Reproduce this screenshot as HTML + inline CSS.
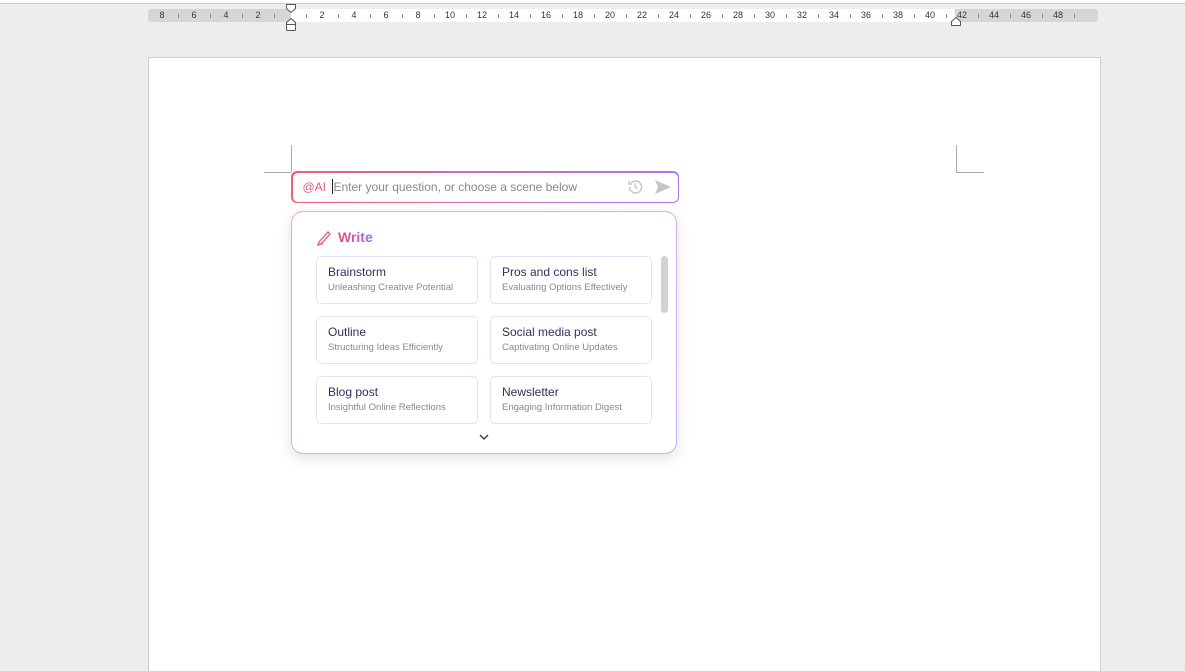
<!DOCTYPE html><html style="height:671px;overflow:hidden"><head><style>
body{margin:0;width:1185px;height:671px;background:#ededed;position:relative;overflow:hidden;font-family:"Liberation Sans",sans-serif}
.abs{position:absolute}
.ruler{left:148px;top:9px;width:950px;height:13px;background:#d6d6d6;border-radius:3px}
.rw{left:291px;top:9px;width:664px;height:13px;background:#fff}
.n{position:absolute;top:10px;font-size:9px;color:#333;width:20px;text-align:center}
.t{position:absolute;top:14px;width:1px;height:4px;background:#888}
.page{left:148px;top:57px;width:951px;height:614px;background:#fff;border:1px solid #d0d0d0;border-bottom:none}
.inp{left:291px;top:171px;width:388px;height:32px;border-radius:6px;background:linear-gradient(90deg,#f0606e,#a777f5);}
.inp>div{position:absolute;left:1.5px;top:1.5px;right:1.5px;bottom:1.5px;background:#fff;border-radius:5px}
.panel{left:291px;top:211px;width:386px;height:243px;border-radius:12px;background:linear-gradient(135deg,#f4aab8,#c9b0f5);box-shadow:0 4px 14px rgba(0,0,0,.12)}
.panel>.in{position:absolute;left:1px;top:1px;right:1px;bottom:1px;background:#fff;border-radius:11px}
.card{position:absolute;width:160px;height:46px;border:1px solid #e6e0fb;border-radius:5px;background:#fff}
.card b{position:absolute;left:11px;top:8px;font-weight:normal;font-size:12px;color:#3d2a5a}
.card i{position:absolute;left:11px;top:25px;font-style:normal;font-size:9.5px;color:#8a8694}
</style></head><body>
<div class="abs" style="left:0;top:0;width:1185px;height:3px;background:#fff;border-bottom:1px solid #c8c8c8"></div>
<div class="abs ruler"></div><div class="abs rw"></div>
<div id="r"></div>
<svg class="abs" style="left:285px;top:3px" width="12" height="30"><path d="M1.5 1.5h9v4l-4.5 4-4.5-4z" fill="#fff" stroke="#555"/><path d="M1.5 19.5l4.5-4 4.5 4v2h-9z" fill="#fff" stroke="#555"/><rect x="1.5" y="21.5" width="9" height="6" rx="1" fill="#fff" stroke="#555"/></svg>
<svg class="abs" style="left:950px;top:15px" width="12" height="12"><path d="M1.5 6.5l4.5-4 4.5 4v4h-9z" fill="#fff" stroke="#555"/></svg>
<div class="abs page"></div>
<div class="abs" style="left:291px;top:145px;width:1px;height:27px;background:#aaa"></div>
<div class="abs" style="left:264px;top:172px;width:27px;height:1px;background:#aaa"></div>
<div class="abs" style="left:956px;top:145px;width:1px;height:27px;background:#aaa"></div>
<div class="abs" style="left:956px;top:172px;width:28px;height:1px;background:#aaa"></div>
<div class="abs inp"><div>
<span class="abs" style="left:10px;top:7px;font-size:12px;color:#e05c8c">@AI</span>
<span class="abs" style="left:39px;top:6px;width:1px;height:15px;background:#222"></span>
<span class="abs" style="left:41px;top:7px;font-size:12px;color:#888">Enter your question, or choose a scene below</span>
<svg class="abs" style="left:333px;top:5px" width="18" height="18" viewBox="0 0 18 18" fill="none" stroke="#c8c8c8" stroke-width="1.5"><path d="M3.5 9a6 6 0 1 0 1.8-4.3"/><path d="M3 3v3h3"/><path d="M9 5.5V9l2.5 1.5"/></svg>
<svg class="abs" style="left:361px;top:5px" width="18" height="18" viewBox="0 0 18 18"><path d="M1 2l16 7-16 7 3-7z" fill="#c4c4c4"/></svg>
</div></div>
<div class="abs panel"><div class="in">
<svg class="abs" style="left:24px;top:16px" width="18" height="18" viewBox="0 0 18 18" fill="none" stroke="#ec5a72" stroke-width="1.3"><path d="M3 14l9-10 2 2-9 10-2.5.5z"/><path d="M1 17c4 0 3-2 6-1"/></svg>
<span class="abs" style="left:46px;top:17px;font-size:14px;font-weight:bold;background:linear-gradient(90deg,#ec4f7c,#9b6cf0);-webkit-background-clip:text;color:transparent">Write</span>
<div class="abs" style="left:369px;top:44px;width:7px;height:57px;background:#d2d2d2;border-radius:4px"></div>
<div class="card" style="left:24px;top:44px"><b>Brainstorm</b><i>Unleashing Creative Potential</i></div>
<div class="card" style="left:198px;top:44px"><b>Pros and cons list</b><i>Evaluating Options Effectively</i></div>
<div class="card" style="left:24px;top:104px"><b>Outline</b><i>Structuring Ideas Efficiently</i></div>
<div class="card" style="left:198px;top:104px"><b>Social media post</b><i>Captivating Online Updates</i></div>
<div class="card" style="left:24px;top:164px"><b>Blog post</b><i>Insightful Online Reflections</i></div>
<div class="card" style="left:198px;top:164px"><b>Newsletter</b><i>Engaging Information Digest</i></div>
<svg class="abs" style="left:187px;top:221px" width="10" height="8"><path d="M1 2l4 4 4-4" fill="none" stroke="#333" stroke-width="1.3"/></svg>
</div></div>
<script>
var r=document.getElementById('r'),h='';
for(var k=-4;k<=24;k++){var x=290+k*32;var v=Math.abs(k*2);if(k!=0&&x<1090)h+='<div class="n" style="left:'+(x-10)+'px">'+v+'</div>';var tx=x+16;if(tx<1085&&tx>150)h+='<div class="t" style="left:'+tx+'px"></div>';}
r.innerHTML=h;
</script>
</body></html>
